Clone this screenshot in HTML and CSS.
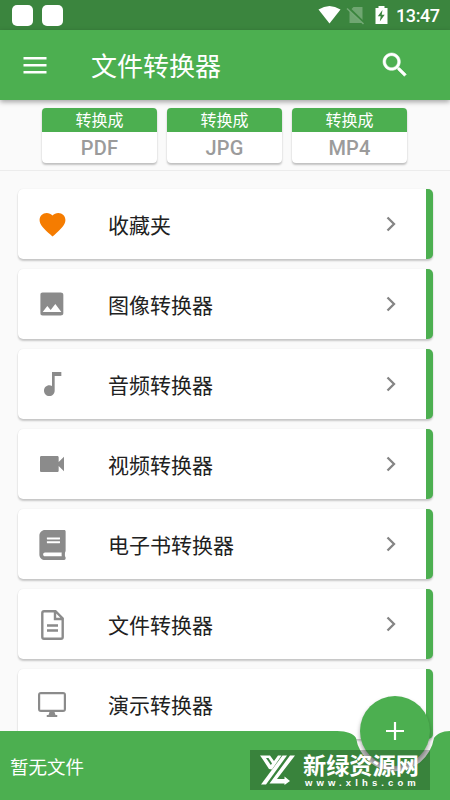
FILE: index.html
```html
<!DOCTYPE html>
<html lang="zh-CN">
<head>
<meta charset="utf-8">
<title>文件转换器</title>
<link rel="stylesheet" href="styles.css">
</head>
<body>
<div class="screen">
  <div class="status">
    <span class="notice"></span><span class="notice"></span>
    <svg class="signals" width="76" height="30" viewBox="0 0 76 30">
      <path d="M.5 9.500Q11.500 2.500 22.500 9.500L11.500 23.500Z" fill="#fff"/>
      <path d="M31.500 11L35.500 7H44.500V23H31.500Z" fill="#6fa671"/>
      <path d="M30 7.500L47 24" stroke="#3b853e" stroke-width="2.500"/>
      <path d="M29 8.500L45.500 24" stroke="#75aa77" stroke-width="1.500"/>
      <path d="M57.500 8H60.500V6H66.500V8H69.500V24H57.500Z" fill="#fff"/>
      <path d="M64.500 10L59.800 16.300H62.700L61.800 21.500L66.700 14.800H63.700Z" fill="#3b853e"/>
    </svg>
    <span class="clock">13:47</span>
  </div>
  <header class="appbar">
    <svg class="menu" width="24" height="18" viewBox="0 0 24 18"><path d="M.5 2.200H23.500M.5 9.200H23.500M.5 16.200H23.500" stroke="#fff" stroke-width="2.400"/></svg>
    <h1>文件转换器</h1>
    <svg class="search" width="32" height="32" viewBox="0 0 24 24"><path fill="#fff" stroke="#fff" stroke-width=".4" d="M15.500 14h-.79l-.28-.27C15.410 12.590 16 11.110 16 9.500 16 5.910 13.090 3 9.500 3S3 5.910 3 9.500 5.910 16 9.500 16c1.610 0 3.090-.59 4.230-1.570l.27.28v.79l5 4.990L20.490 19l-4.990-5zm-6 0C7.010 14 5 11.990 5 9.500S7.010 5 9.500 5 14 7.010 14 9.500 11.990 14 9.500 14z"/></svg>
  </header>
  <div class="quick">
    <div class="tile"><span class="to">转换成</span><span class="format">PDF</span></div>
    <div class="tile"><span class="to">转换成</span><span class="format">JPG</span></div>
    <div class="tile"><span class="to">转换成</span><span class="format">MP4</span></div>
  </div>
  <main class="list">
    <div class="row">
      <svg class="icon heart" viewBox="0 0 24 24"><path d="M12 21.350l-1.450-1.320C5.400 15.360 2 12.280 2 8.500 2 5.420 4.420 3 7.500 3c1.740 0 3.410.81 4.500 2.090C13.090 3.810 14.760 3 16.500 3 19.580 3 22 5.420 22 8.500c0 3.780-3.400 6.860-8.550 11.540z"/></svg>
      <span class="label">收藏夹</span><svg class="chevron" viewBox="0 0 10 16"><path d="M1.500 1.500L8 8L1.500 14.500"/></svg>
    </div>
    <div class="row">
      <svg class="icon" viewBox="0 0 24 24"><path d="M20.500 19V5c0-1.100-.9-1.700-2-1.700H5c-1.100 0-1.700.6-1.700 1.700v14c0 1.100.6 1.700 1.700 1.700h13.500c1.100 0 2-.6 2-1.700zM8.500 13.500l2.500 3.010L14.500 12l4.500 6H5z"/></svg>
      <span class="label">图像转换器</span><svg class="chevron" viewBox="0 0 10 16"><path d="M1.500 1.500L8 8L1.500 14.500"/></svg>
    </div>
    <div class="row">
      <svg class="icon" viewBox="0 0 24 24"><path d="M12 3v10.550c-.59-.34-1.270-.55-2-.55-2.210 0-4 1.790-4 4s1.790 4 4 4 4-1.790 4-4V6h5V3z"/></svg>
      <span class="label">音频转换器</span><svg class="chevron" viewBox="0 0 10 16"><path d="M1.500 1.500L8 8L1.500 14.500"/></svg>
    </div>
    <div class="row">
      <svg class="icon" viewBox="0 0 24 24"><path d="M17 10.500V7c0-.55-.45-1-1-1H4c-.55 0-1 .45-1 1v10c0 .55.450 1 1 1h12c.55 0 1-.45 1-1v-3.500l4 4v-11z"/></svg>
      <span class="label">视频转换器</span><svg class="chevron" viewBox="0 0 10 16"><path d="M1.500 1.500L8 8L1.500 14.500"/></svg>
    </div>
    <div class="row">
      <svg class="icon book" viewBox="0 0 448 512"><path d="M448 360V24c0-13.300-10.700-24-24-24H96C43 0 0 43 0 96v320c0 53 43 96 96 96h328c13.300 0 24-10.700 24-24v-16c0-7.500-3.500-14.300-8.900-18.700-4.200-15.400-4.200-59.300 0-74.700 5.400-4.300 8.900-11.100 8.900-18.600zM128 134c0-3.300 2.700-6 6-6h212c3.300 0 6 2.700 6 6v20c0 3.300-2.700 6-6 6H134c-3.300 0-6-2.700-6-6v-20zm0 64c0-3.300 2.700-6 6-6h212c3.300 0 6 2.700 6 6v20c0 3.300-2.700 6-6 6H134c-3.300 0-6-2.700-6-6v-20zm253.400 250H96c-17.700 0-32-14.300-32-32s14.300-32 32-32h285.400c-1.900 17.100-1.900 46.900 0 64z"/></svg>
      <span class="label">电子书转换器</span><svg class="chevron" viewBox="0 0 10 16"><path d="M1.500 1.500L8 8L1.500 14.500"/></svg>
    </div>
    <div class="row">
      <svg class="icon document" viewBox="0 0 23 30"><path d="M3 1.250H14.500L21.700 8.400V27Q21.700 28.700 20 28.700H3Q1.300 28.700 1.300 27V3Q1.300 1.250 3 1.250ZM14 2V9H21M6 15.500H17M6 20.500H17"/></svg>
      <span class="label">文件转换器</span><svg class="chevron" viewBox="0 0 10 16"><path d="M1.500 1.500L8 8L1.500 14.500"/></svg>
    </div>
    <div class="row">
      <svg class="icon monitor" viewBox="0 0 28 26"><path d="M3 0H25Q28 0 28 3V17Q28 20 25 20H16.500L17.500 23H19Q20 24 19 25H9Q8 24 9 23H10.500L11.500 20H3Q0 20 0 17V3Q0 0 3 0ZM2.200 2.200V17.800H25.800V2.200Z" fill-rule="evenodd"/></svg>
      <span class="label">演示转换器</span><svg class="chevron" viewBox="0 0 10 16"><path d="M1.500 1.500L8 8L1.500 14.500"/></svg>
    </div>
  </main>
  <footer class="bottom">
    <svg class="bar" width="450" height="69" viewBox="0 0 450 69"><path d="M0 0H337C347 0 354 3 356 7A39.500 39.500 0 0 0 434 7C437 3 442 0 450 0V69H0Z"/></svg>
    <span class="empty">暂无文件</span>
  </footer>
  <div class="fab"><svg width="18" height="18" viewBox="0 0 18 18"><path d="M9 0V18M0 9H18" stroke="#fff" stroke-width="2.200"/></svg></div>
  <div class="mark">
    <svg width="36" height="30" viewBox="0 0 36 30" fill="#fff">
      <path d="M0 .5H10L14 6L18 .5H21.500L12 14.500L9 14L2.500 4Z"/>
      <path d="M22.500 .5H27L6 29.500H1Z"/>
      <path d="M30 .5H35L17 24H24.500V21.500L30 26L24.500 30V28.500H9.500Z"/>
      <path d="M6 3H8.500L12 8.500L10.800 10Z" fill="#398341"/>
    </svg>
    <div class="site"><span class="name">新绿资源网</span><span class="url">www.xlhs.com</span></div>
  </div>
</div>
</body>
</html>
```
FILE: styles.css
```css
* { box-sizing: border-box; }
body { margin: 0; font-family: Roboto, "Noto Sans CJK SC", sans-serif; }
svg { display: block; flex: none; }
.screen { position: relative; width: 450px; height: 800px; overflow: hidden; background: #fafafa; display: flex; flex-direction: column; }

.status { flex: none; height: 30px; padding-left: 12px; display: flex; align-items: center; background: #3b853e; }
.notice { width: 21px; height: 21px; margin-right: 9px; border-radius: 5px; background: #fff; }
.signals { margin-left: 246px; }
.clock { margin: 1px 0 0 2px; color: #fff; font-size: 18px; font-weight: 500; line-height: 22px; letter-spacing: -.4px; }

.appbar { position: relative; flex: none; height: 70px; padding: 0 39px 0 23px; display: flex; align-items: center; background: #4caf50; box-shadow: 0 2px 5px rgba(0, 0, 0, .35); }
.appbar h1 { margin: 3px auto 0 44px; color: #fff; font-size: 26px; line-height: 36px; font-weight: 400; }

.quick { flex: none; height: 71px; padding: 8px 42px 0; display: flex; gap: 10px; border-bottom: 1px solid #ececec; }
.tile { width: 115px; height: 55px; display: flex; flex-direction: column; border-radius: 4px; overflow: hidden; background: #fff; box-shadow: 0 2px 2px rgba(0, 0, 0, .22), 0 0 1px rgba(0, 0, 0, .12); text-align: center; }
.to { height: 24px; background: #4caf50; color: #fff; font-size: 16px; line-height: 26px; }
.format { color: #9b9b9b; font-size: 20px; font-weight: 500; line-height: 32px; letter-spacing: .2px; }

.list { flex: none; height: 629px; padding: 18px 17px 0 18px; display: flex; flex-direction: column; gap: 10px; overflow: hidden; }
.row { flex: none; height: 70px; padding: 0 30px 0 18px; display: flex; align-items: center; border-right: 7px solid #4caf50; border-radius: 5px; background: #fff; box-shadow: 0 2px 2px rgba(0, 0, 0, .2), 0 0 1px rgba(0, 0, 0, .12); }
.icon { width: 32px; height: 32px; margin-right: 40px; fill: #8b8b8b; }
.heart { width: 31px; height: 31px; margin: 0 40px 0 1px; fill: #f57c00; }
.book { width: 27px; height: 30px; margin: 2px 42px 0 3px; }
.document { width: 23px; height: 30px; margin: 2px 44px 0 5px; fill: none; stroke: #8b8b8b; stroke-width: 2.4; }
.monitor { width: 28px; height: 26px; margin: 1px 42px 0 2px; }
.label { margin: 3px auto 0 0; color: #212121; font-size: 21px; line-height: 30px; }
.chevron { width: 10px; height: 16px; fill: none; stroke: #858585; stroke-width: 2.3; }

.bottom { position: absolute; left: 0; bottom: 0; width: 450px; height: 69px; }
.bar { fill: #4caf50; }
.empty { position: absolute; left: 10px; top: 23px; color: #fff; font-size: 18.5px; line-height: 28px; }
.fab { position: absolute; left: 360px; top: 696px; width: 70px; height: 70px; display: flex; align-items: center; justify-content: center; border-radius: 50%; background: #4caf50; box-shadow: 0 3px 4px rgba(0, 0, 0, .35); }
.mark { position: absolute; left: 250px; top: 750px; width: 180px; height: 40px; padding: 0 9px 0 10px; display: flex; align-items: center; justify-content: space-between; background: rgba(0, 0, 0, .25); color: #fff; }
.site { display: flex; flex-direction: column; width: 118px; }
.name { font-family: "Noto Sans CJK SC", sans-serif; font-size: 23.2px; font-weight: 700; line-height: 24px; white-space: nowrap; }
.url { margin-top: 2px; padding-left: 2px; font: 700 9.5px/10px "Liberation Sans", sans-serif; letter-spacing: 4.1px; white-space: nowrap; }
```
